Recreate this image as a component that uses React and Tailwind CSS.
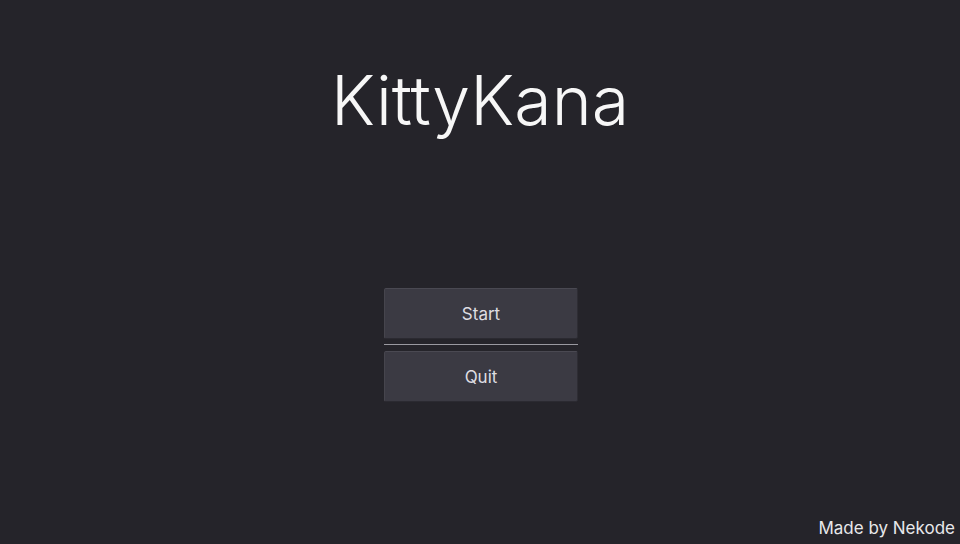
export default function App() {
  return (
    <div
      className="relative flex h-[544px] w-[960px] flex-col items-center overflow-hidden bg-[#25242a] text-white"
      style={{ fontFamily: 'Inter, "Noto Sans", sans-serif' }}
    >
      <h1 className="mt-[57px] text-[68px] font-light leading-[87px] text-[#f7f7f7]">KittyKana</h1>

      <div className="ml-[2px] mt-[144px] flex w-[194px] flex-col">
        <button className="h-[51px] w-[194px] rounded-[2px] border border-t-[#4a4952] border-l-[#46454d] border-r-[#2e2d34] border-b-[#2b2a31] bg-[#3b3a43] pt-[2px] text-[17px] text-[#dedde2]">
          Start
        </button>
        <div className="mb-[6px] mt-[5px] h-px w-full bg-[#9a99a0]" />
        <button className="h-[51px] w-[194px] rounded-[2px] border border-t-[#4a4952] border-l-[#46454d] border-r-[#2e2d34] border-b-[#2b2a31] bg-[#3b3a43] pt-[2px] text-[17px] text-[#dedde2]">
          Quit
        </button>
      </div>

      <div className="absolute bottom-[3px] right-[5px] text-[17px] text-[#e8e8ea]">Made by Nekode</div>
    </div>
  );
}
